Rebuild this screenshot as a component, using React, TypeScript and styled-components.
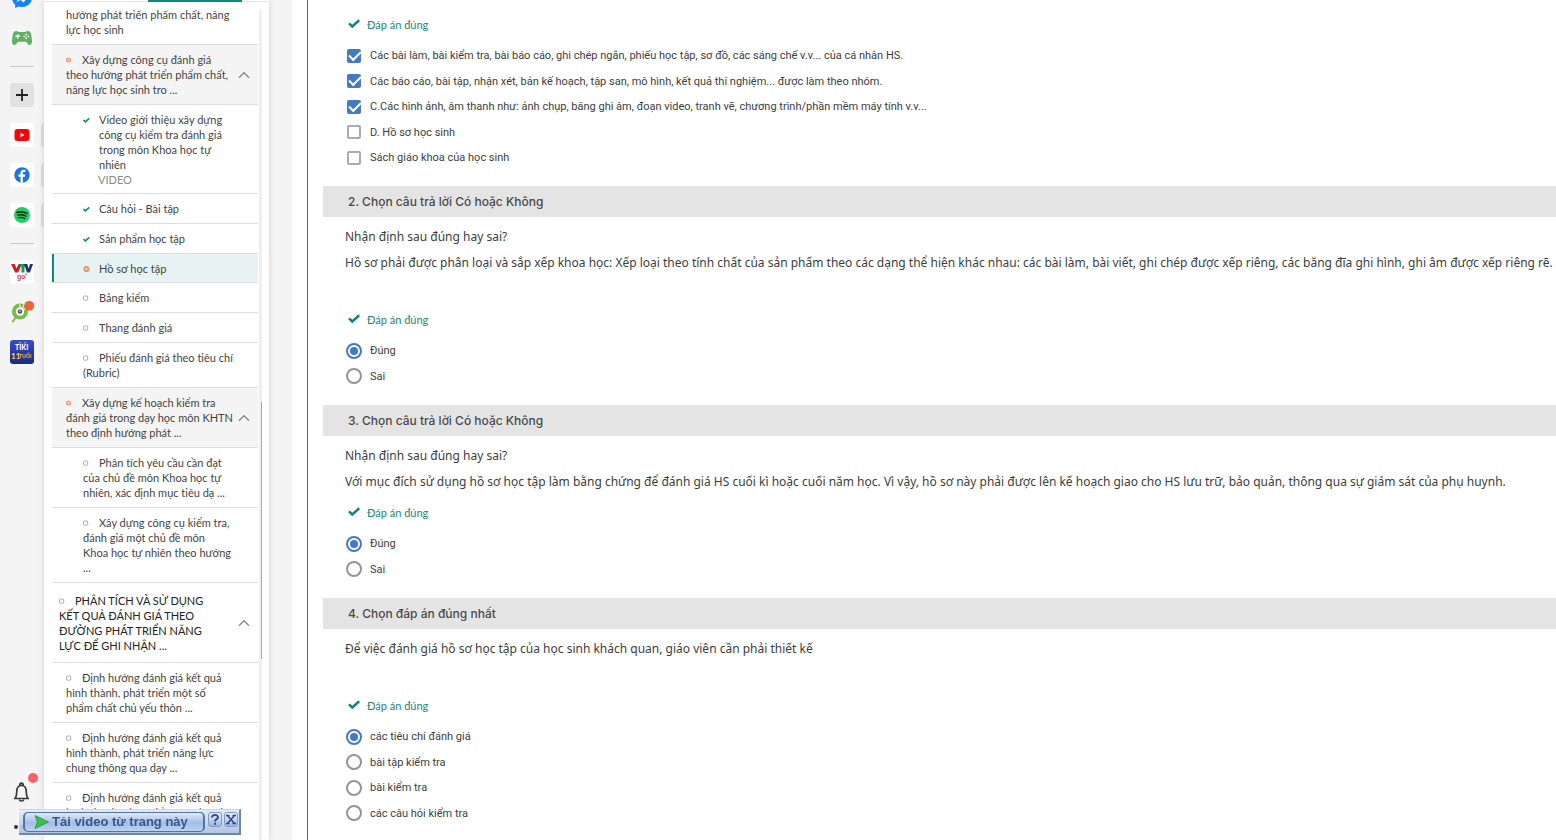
import React from "react";
import styled, { createGlobalStyle, css } from "styled-components";

const GlobalStyle = createGlobalStyle`
  * { box-sizing: border-box; }
  body { margin: 0; background: #f4f4f4; color: #3d3d3d; font-family: Lato, "Open Sans", sans-serif; font-size: 11px; font-variant-ligatures: none; }
  ul, p, h2, fieldset { margin: 0; padding: 0; border: 0; font-weight: 400; }
  ul { list-style: none; }
  button { font: inherit; color: inherit; border: 0; padding: 0; background: none; cursor: pointer; }
`;

const Shell = styled.div`
  display: flex;
  height: 100vh;
  overflow: hidden;
`;

/* ---------- browser rail ---------- */

const Rail = styled.nav`
  display: flex;
  flex-direction: column;
  align-items: center;
  gap: 16px;
  flex: 0 0 44px;
  padding-bottom: 1px;
  background: #f4f4f4;
`;

const RailTop = styled.div`
  display: flex;
  flex-direction: column;
  align-items: center;
  gap: 16px;
  width: 100%;
  margin-top: -14px;
`;

const RailBottom = styled.div`
  display: flex;
  flex-direction: column;
  align-items: center;
  gap: 12px;
  margin-top: auto;
`;

const RailRule = styled.hr`
  width: 24px;
  height: 1px;
  margin: 0;
  border: 0;
  background: #c8c8c8;
`;

const Tile = styled.button<{ $bg?: string; $tab?: boolean }>`
  position: relative;
  display: grid;
  place-items: center;
  flex: none;
  width: 24px;
  height: 24px;
  border-radius: 3px;
  background: ${(p) => p.$bg || "transparent"};
  svg { display: block; overflow: visible; }
  ${(p) =>
    p.$tab &&
    css`
      &::after {
        content: "";
        position: absolute;
        top: 0;
        right: -10px;
        width: 3px;
        height: 24px;
        border-radius: 3px 0 0 3px;
        background: #d6d6d6;
      }
    `}
`;

/* ---------- course outline ---------- */

const Sidebar = styled.aside`
  display: flex;
  flex-direction: column;
  flex: 0 0 225px;
  min-height: 0;
  background: #fff;
  box-shadow: 0 0 6px rgba(0, 0, 0, 0.14);
`;

const TabStrip = styled.div`
  display: flex;
  flex: none;
  height: 10px;
  padding: 0 27px 0 104px;
  background: linear-gradient(#fff 1px, #e2e2e2 1px, #e2e2e2 2px, #fff 2px);
`;

const TabLine = styled.div`
  flex: 1;
  height: 2px;
  background: #10887e;
`;

const Scroller = styled.div`
  display: flex;
  flex: 1;
  min-height: 0;
  overflow: hidden;
  padding-left: 8px;
`;

const Outline = styled.ul`
  flex: 1;
  margin-top: -10px;
`;

const Track = styled.div`
  flex: 0 0 3px;
  margin: 0 7px 0 1px;
  padding: 392px 0 0 2px;
  background: #efefef;
`;

const Thumb = styled.div`
  height: 257px;
  background: #a8a8a8;
`;

type Kind = "chapter" | "section" | "lesson";

const indent: Record<Kind, number> = { chapter: 7, section: 14, lesson: 31 };

const Row = styled.li<{ $kind: Kind; $shaded?: boolean; $active?: boolean }>`
  display: flex;
  align-items: center;
  justify-content: space-between;
  padding: ${(p) => (p.$kind === "chapter" ? "10px 8px 9px" : p.$active ? "7px 8px 6px" : "7px 8px")};
  padding-left: ${(p) => indent[p.$kind]}px;
  border-bottom: 1px solid #dedede;
  line-height: 15px;
  white-space: pre;
  background: ${(p) => (p.$active ? "#e6f3f2" : p.$shaded ? "#f4f4f4" : "transparent")};
  box-shadow: ${(p) => (p.$active ? "inset 2px 0 #10887e" : "none")};
  color: ${(p) => (p.$kind === "chapter" ? "#222" : "#444")};
`;

const RowLink = styled.a<{ $hang?: boolean }>`
  color: inherit;
  text-decoration: none;
  ${(p) =>
    p.$hang &&
    css`
      display: block;
      padding-left: 16px;
      text-indent: -16px;
    `}
`;

const Mark = styled.span`
  display: inline-block;
  width: 16px;
  text-indent: 0;
  svg { display: inline-block; vertical-align: 1px; }
`;

const Tag = styled.div`
  margin-bottom: -1px;
  padding-left: 15px;
  color: #8a8a8a;
`;

const ChevronButton = styled.button`
  flex: none;
  svg { display: block; }
`;

type State = "open" | "busy" | "current" | "done";

const StateMark = ({ state }: { state: State }) => (
  <Mark>
    {state === "done" && (
      <svg width="7" height="6" viewBox="0 0 7 6"><path d="M.4 3 2.400 4.900 6.300 1.400" fill="none" stroke="#10887e" strokeWidth="1.500" /></svg>
    )}
    {state === "open" && (
      <svg width="6" height="6" viewBox="0 0 6 6"><rect x=".5" y="1" width="4.200" height="4.200" rx="1" fill="#fff" stroke="#a4a4a4" strokeWidth=".9" /></svg>
    )}
    {state === "busy" && (
      <svg width="6" height="6" viewBox="0 0 6 6"><circle cx="2.500" cy="3" r="1.800" fill="#fbe3d8" stroke="#f2a17b" strokeWidth="1.600" /></svg>
    )}
    {state === "current" && (
      <svg width="7" height="6" viewBox="0 0 7 6"><circle cx="3.400" cy="3" r="2.100" fill="#fbe3d8" stroke="#ee9468" strokeWidth="2" /></svg>
    )}
  </Mark>
);

interface Entry {
  kind: Kind;
  text: string;
  state?: State;
  shaded?: boolean;
  chevron?: boolean;
  tag?: string;
}

const entries: Entry[] = [
  { kind: "section", text: "hướng phát triển phẩm chất, năng\nlực học sinh" },
  { kind: "section", state: "busy", shaded: true, chevron: true, text: "Xây dựng công cụ đánh giá\ntheo hướng phát triển phẩm chất,\nnăng lực học sinh tro ..." },
  { kind: "lesson", state: "done", tag: "VIDEO", text: "Video giới thiệu xây dựng\ncông cụ kiểm tra đánh giá\ntrong môn Khoa học tự\nnhiên" },
  { kind: "lesson", state: "done", text: "Câu hỏi - Bài tập" },
  { kind: "lesson", state: "done", text: "Sản phẩm học tập" },
  { kind: "lesson", state: "current", text: "Hồ sơ học tập" },
  { kind: "lesson", state: "open", text: "Bảng kiểm" },
  { kind: "lesson", state: "open", text: "Thang đánh giá" },
  { kind: "lesson", state: "open", text: "Phiếu đánh giá theo tiêu chí\n(Rubric)" },
  { kind: "section", state: "busy", shaded: true, chevron: true, text: "Xây dựng kế hoạch kiểm tra\nđánh giá trong dạy học môn KHTN\ntheo định hướng phát ..." },
  { kind: "lesson", state: "open", text: "Phân tích yêu cầu cần đạt\ncủa chủ đề môn Khoa học tự\nnhiên, xác định mục tiêu dạ ..." },
  { kind: "lesson", state: "open", text: "Xây dựng công cụ kiểm tra,\nđánh giá một chủ đề môn\nKhoa học tự nhiên theo hướng\n..." },
  { kind: "chapter", state: "open", chevron: true, text: "PHÂN TÍCH VÀ SỬ DỤNG\nKẾT QUẢ ĐÁNH GIÁ THEO\nĐƯỜNG PHÁT TRIỂN NĂNG\nLỰC ĐỂ GHI NHẬN ..." },
  { kind: "section", state: "open", text: "Định hướng đánh giá kết quả\nhình thành, phát triển một số\nphẩm chất chủ yếu thôn ..." },
  { kind: "section", state: "open", text: "Định hướng đánh giá kết quả\nhình thành, phát triển năng lực\nchung thông qua dạy ..." },
  { kind: "section", state: "open", text: "Định hướng đánh giá kết quả\nhình thành, phát triển năng lực đặc\nthù thông qua dạy ..." },
];

/* ---------- quiz ---------- */

const Main = styled.main`
  flex: 1;
  min-width: 0;
  margin-left: 23px;
  padding-left: 15px;
  background: #fff;
`;

const Quiz = styled.form`
  height: 100%;
  overflow: hidden;
  padding: 7px 0 0 15px;
  border-left: 1px solid #1f7f78;
`;

const Heading = styled.h2`
  padding: 0 26px 0 25px;
  line-height: 31px;
  background: #e4e4e4;
  color: #4a4a4a;
  font: 500 12px/31px Inter, sans-serif;
`;

const Prompt = styled.div`
  padding: 7px 0 0 22px;
  font: 12px/26px "Noto Sans", sans-serif;
  white-space: nowrap;
  p { min-height: 26px; }
`;

const Correct = styled.div`
  display: flex;
  align-items: center;
  gap: 7px;
  height: 34px;
  margin-bottom: 2px;
  padding-left: 25px;
  color: #22857b;
`;

const Options = styled.fieldset`
  display: grid;
  grid-auto-rows: 25px 26px;
  padding: 0 0 16px 23px;
  font-family: Roboto, sans-serif;
`;

const Option = styled.label`
  display: flex;
  align-items: center;
  gap: 8px;
`;

const Check = styled.input`
  appearance: none;
  display: grid;
  place-items: center;
  width: 14px;
  height: 14px;
  margin: 0 1px;
  border: 2px solid #ababab;
  border-radius: 2px;
  &:checked { border-color: #447ac4; background: #447ac4; }
  &:checked::after {
    content: "";
    width: 10px;
    height: 5px;
    margin-bottom: 3px;
    border: solid #fff;
    border-width: 0 0 2px 2px;
    transform: rotate(-45deg);
  }
`;

const Radio = styled.input`
  appearance: none;
  display: grid;
  place-items: center;
  width: 16px;
  height: 16px;
  margin: 0;
  border: 2px solid #959595;
  border-radius: 50%;
  &:checked { border-color: #447ac4; }
  &:checked::after {
    content: "";
    width: 8px;
    height: 8px;
    border-radius: 50%;
    background: #447ac4;
  }
`;

interface Question {
  title?: string;
  prompt?: string[];
  multiple?: boolean;
  options: [string, boolean][];
}

const questions: Question[] = [
  {
    multiple: true,
    options: [
      ["Các bài làm, bài kiểm tra, bài báo cáo, ghi chép ngắn, phiếu học tập, sơ đồ, các sáng chế v.v... của cá nhân HS.", true],
      ["Các báo cáo, bài tập, nhận xét, bản kế hoạch, tập san, mô hình, kết quả thí nghiệm... được làm theo nhóm.", true],
      ["C.Các hình ảnh, âm thanh như: ảnh chụp, băng ghi âm, đoạn video, tranh vẽ, chương trình/phần mềm máy tính v.v...", true],
      ["D. Hồ sơ học sinh", false],
      ["Sách giáo khoa của học sinh", false],
    ],
  },
  {
    title: "2. Chọn câu trả lời Có hoặc Không",
    prompt: [
      "Nhận định sau đúng hay sai?",
      "Hồ sơ phải được phân loại và sắp xếp khoa học: Xếp loại theo tính chất của sản phẩm theo các dạng thể hiện khác nhau: các bài làm, bài viết, ghi chép được xếp riêng, các băng đĩa ghi hình, ghi âm được xếp riêng rẽ.",
      "",
    ],
    options: [["Đúng", true], ["Sai", false]],
  },
  {
    title: "3. Chọn câu trả lời Có hoặc Không",
    prompt: [
      "Nhận định sau đúng hay sai?",
      "Với mục đích sử dụng hồ sơ học tập làm bằng chứng để đánh giá HS cuối kì hoặc cuối năm học. Vì vậy, hồ sơ này phải được lên kế hoạch giao cho HS lưu trữ, bảo quản, thông qua sự giám sát của phụ huynh.",
    ],
    options: [["Đúng", true], ["Sai", false]],
  },
  {
    title: "4. Chọn đáp án đúng nhất",
    prompt: ["Để việc đánh giá hồ sơ học tập của học sinh khách quan, giáo viên cần phải thiết kế", ""],
    options: [["các tiêu chí đánh giá", true], ["bài tập kiểm tra", false], ["bài kiểm tra", false], ["các câu hỏi kiểm tra", false]],
  },
];

/* ---------- download bar ---------- */

const Downloader = styled.div`
  position: fixed;
  left: 19px;
  bottom: 5px;
  display: flex;
  align-items: center;
  gap: 2px;
  width: 222px;
  height: 26px;
  padding: 0 2px 0 4px;
  border: solid #6e86ab;
  border-width: 1px 2px 2px 0;
  border-top-color: #c9d6ea;
  background: linear-gradient(rgba(226, 236, 249, 0.94), rgba(172, 194, 228, 0.94));
`;

const DownloadButton = styled.button`
  display: flex;
  align-items: center;
  gap: 3px;
  flex: none;
  width: 182px;
  height: 20px;
  margin-right: 1px;
  padding-left: 9px;
  border: solid #5673a4;
  border-width: 1px 2px;
  border-radius: 5px;
  background: linear-gradient(#dfe9f8, #a3bde6 55%, #bdd2f2);
  color: #3b5787;
  font: bold 13px "Liberation Sans", sans-serif;
  white-space: nowrap;
`;

const MiniButton = styled.button`
  display: grid;
  place-items: center;
  flex: none;
  width: 14px;
  height: 15px;
  margin-bottom: 4px;
  border: 1px solid #7f9ac4;
  border-radius: 3px;
  background: linear-gradient(#e6effb, #9db8e2);
  svg { display: block; }
`;

export default function App() {
  return (
    <>
      <GlobalStyle />
      <Shell>
        <Rail>
          <RailTop>
            <Tile aria-label="Messenger">
              <svg width="20" height="20" viewBox="0 0 20 20"><path d="M10 0C4.300 0 0 4.100 0 9.600c0 2.900 1.200 5.400 3.200 7.100V20l3-1.600c1.200.3 2.500.5 3.800.5 5.700 0 10-4.100 10-9.400S15.700 0 10 0z" fill="#0a84ff" /><path d="m4 14.500 4.500-5.300 3 2.600L16 9.200l-4.500 5.300-3-2.600z" fill="#fff" /></svg>
            </Tile>
            <Tile aria-label="Games">
              <svg width="20" height="14" viewBox="0 0 20 14"><path d="M4.500 0C2.300 0 1.200 1.300.7 3.800L0 9.800C-.2 12.500.8 14 2.400 14c1.500 0 2.300-1.400 3.300-3.300h8.600c1 1.900 1.800 3.300 3.300 3.300 1.600 0 2.600-1.500 2.400-4.200l-.7-6C18.800 1.300 17.700 0 15.500 0c-1.300 0-1.500.9-2.500.9H7C6 .9 5.800 0 4.500 0z" fill="#5fb15f" /><path d="M5.700 3v4.600M3.400 5.300H8" stroke="#fff" strokeWidth="1.400" /><g fill="#fff"><circle cx="14.200" cy="3.400" r=".9" /><circle cx="14.200" cy="7.200" r=".9" /><circle cx="12.300" cy="5.300" r=".9" /><circle cx="16.200" cy="5.300" r=".9" /></g></svg>
            </Tile>
            <RailRule />
            <Tile $bg="#e1e1e1" aria-label="Add">
              <svg width="12" height="12" viewBox="0 0 12 12"><path d="M6 0v12M0 6h12" stroke="#222" strokeWidth="1.800" /></svg>
            </Tile>
            <Tile $bg="#fff" $tab aria-label="YouTube">
              <svg width="16" height="12" viewBox="0 0 16 12"><rect x=".5" width="15" height="12" rx="3" fill="#f50505" /><path d="m6.500 3.700 4 2.300-4 2.300z" fill="#fff" /></svg>
            </Tile>
            <Tile $bg="#fff" $tab aria-label="Facebook">
              <svg width="16" height="16" viewBox="0 0 16 16"><circle cx="8" cy="8" r="7.700" fill="#1b74e4" /><path d="M8.900 15.700V9.800h2l.4-2.300H8.900V6.200c0-.7.400-1.200 1.300-1.200h1.200V3c-.5-.1-1-.2-1.700-.2-2 0-3.200 1.200-3.200 3.200v1.500H4.400v2.300h2.100v5.900z" fill="#fff" /></svg>
            </Tile>
            <Tile $bg="#fff" $tab aria-label="Spotify">
              <svg width="16" height="16" viewBox="0 0 16 16"><circle cx="8" cy="8" r="8" fill="#1ed05f" /><g fill="none" stroke="#14231a" strokeLinecap="round"><path d="M3 5.500c3.500-1 7-.7 10 .9" strokeWidth="1.600" /><path d="M3.600 8.200c3-.8 5.800-.5 8.400.9" strokeWidth="1.300" /><path d="M4 10.700c2.500-.6 4.800-.4 6.900.8" strokeWidth="1.100" /></g></svg>
            </Tile>
            <RailRule />
            <Tile $bg="#fff" aria-label="VTV go">
              <svg width="22" height="18" viewBox="0 0 22 18"><path d="M0 1h3.600l2 4.600L7.500 1H11L7.100 9.500H4z" fill="#cf2027" /><path d="M8.500 1h7v2.700h-2v5.800h-3V3.700H8.500z" fill="#1f9a4c" /><path d="M13 1h3.200l1.500 4.600L19 1h3l-3 8.500h-3z" fill="#23317e" /><text x="6" y="16" fontFamily="Liberation Sans, sans-serif" fontSize="7" fontWeight="700" fill="#d8434a">go</text><path d="M15.200 10.500v2M14 11h1.500" stroke="#d8434a" strokeWidth=".7" /></svg>
            </Tile>
            <Tile aria-label="Cốc Cốc">
              <svg width="24" height="24" viewBox="0 0 24 24"><path d="M6 17 2.800 21.500" stroke="#7cbb4e" strokeWidth="2" strokeLinecap="round" /><circle cx="10" cy="11.500" r="6" fill="none" stroke="#79bd52" strokeWidth="4.200" /><circle cx="10" cy="11.500" r="4" fill="#fff" /><circle cx="10" cy="11.500" r="2.200" fill="#3f5157" /><circle cx="10" cy="11" r=".8" fill="#fff" /><path d="m9.600 4.300 1 3.500M14 4.500l-1.500 4M16 8l-3 2" stroke="#f4f4f4" strokeWidth="1.200" /><path d="m11.500 4.500.6 2.500" stroke="#ee6238" strokeWidth=".9" /><circle cx="19.200" cy="5.800" r="4.900" fill="#ee6238" /></svg>
            </Tile>
            <Tile $bg="linear-gradient(#3b4bc8, #1c2c80)" aria-label="Tiki">
              <svg width="24" height="24" viewBox="0 0 24 24"><text x="5" y="10" fontFamily="Lato, sans-serif" fontSize="7" fontWeight="900" fill="#fff">TIKI</text><path d="m9 3.400 1-1.100 1 1.100M14 3.400l1-1.100 1 1.100" fill="none" stroke="#fff" strokeWidth=".8" /><text x="1" y="19" fontFamily="Lato, sans-serif" fontSize="8" fontWeight="900" fill="#ffc93c">11</text><text x="9" y="18" fontFamily="Lato, sans-serif" fontSize="5" fontWeight="900" fill="#ffa63c">TUỔI</text></svg>
            </Tile>
          </RailTop>
          <RailBottom>
            <Tile aria-label="Notifications">
              <svg width="24" height="24" viewBox="0 0 24 24"><path d="M4 19.500h15M5.500 19c1.100-2.200 1.300-4.300 1.300-7 0-3.200 1.800-5.600 4.700-5.600s4.700 2.400 4.700 5.600c0 2.700.2 4.800 1.300 7" fill="none" stroke="#3a3a3a" strokeWidth="1.700" strokeLinejoin="round" /><path d="M9.700 6.500c0-3.200 3.600-3.200 3.600 0M9.200 20.500c.6 2 4 2 4.600 0" fill="none" stroke="#3a3a3a" strokeWidth="1.600" /><circle cx="23" cy="-1" r="5" fill="#f9606a" /></svg>
            </Tile>
            <Tile aria-label="More">
              <svg width="16" height="4" viewBox="0 0 16 4"><g fill="#333"><circle cx="2" cy="2" r="2" /><circle cx="8" cy="2" r="2" /><circle cx="14" cy="2" r="2" /></g></svg>
            </Tile>
          </RailBottom>
        </Rail>

        <Sidebar>
          <TabStrip><TabLine /></TabStrip>
          <Scroller>
            <Outline>
              {entries.map((e, i) => (
                <Row key={i} $kind={e.kind} $shaded={e.shaded} $active={e.state === "current"}>
                  <div>
                    <RowLink href="#" $hang={!!e.tag}>
                      {e.state && <StateMark state={e.state} />}
                      {e.text}
                    </RowLink>
                    {e.tag && <Tag>{e.tag}</Tag>}
                  </div>
                  {e.chevron && (
                    <ChevronButton aria-label="Collapse">
                      <svg width="12" height="8" viewBox="0 0 12 8"><path d="m1 6.700 5-5 5 5" fill="none" stroke="#888" strokeWidth="1.300" /></svg>
                    </ChevronButton>
                  )}
                </Row>
              ))}
            </Outline>
            <Track><Thumb /></Track>
          </Scroller>
        </Sidebar>

        <Main>
          <Quiz>
            {questions.map((q, i) => (
              <section key={i}>
                {q.title && <Heading>{q.title}</Heading>}
                {q.prompt && (
                  <Prompt>
                    {q.prompt.map((t, j) => <p key={j}>{t}</p>)}
                  </Prompt>
                )}
                <Correct>
                  <svg width="12" height="10" viewBox="0 0 12 10"><path d="m1 4.300 3.300 3.200L11.200 1.300" fill="none" stroke="#16827a" strokeWidth="2.500" /></svg>
                  <span>Đáp án đúng</span>
                </Correct>
                <Options>
                  {q.options.map(([text, on]) => (
                    <Option key={text}>
                      {q.multiple ? (
                        <Check type="checkbox" defaultChecked={on} />
                      ) : (
                        <Radio type="radio" name={"q" + i} defaultChecked={on} />
                      )}
                      <span>{text}</span>
                    </Option>
                  ))}
                </Options>
              </section>
            ))}
          </Quiz>
        </Main>
      </Shell>

      <Downloader>
        <DownloadButton>
          <svg width="15" height="14" viewBox="0 0 15 14"><path d="M1 .5 14.500 7 1 13.500 3.500 7z" fill="#35c24a" stroke="#1f9838" strokeWidth=".8" /></svg>
          Tải video từ trang này
        </DownloadButton>
        <MiniButton aria-label="Help">
          <svg width="12" height="13" viewBox="0 0 12 13"><path d="M3 4.500C3 1 9 1 9 4.300 9 6.300 6 6 6 8.500M6 9.800v2" fill="none" stroke="#2f4a78" strokeWidth="1.900" /></svg>
        </MiniButton>
        <MiniButton aria-label="Close">
          <svg width="12" height="13" viewBox="0 0 12 13"><path d="m2.500 2.500 7 8M9.500 2.500l-7 8M1 2.400h3.500M7.500 2.400H11M1 10.600h3.500M7.500 10.600H11" fill="none" stroke="#2f4a78" strokeWidth="1.500" /></svg>
        </MiniButton>
      </Downloader>
    </>
  );
}
